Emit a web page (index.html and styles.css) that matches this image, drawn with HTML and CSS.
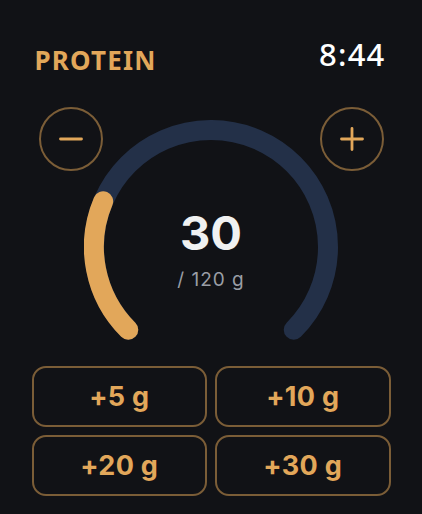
FILE: index.html
```html
<!DOCTYPE html>
<html lang="en">
<head>
  <meta charset="UTF-8">
  <meta name="viewport" content="width=device-width, initial-scale=1.0">
  <title>Protein</title>
  <link rel="stylesheet" href="styles.css">
</head>
<body>
  <div class="app">
    <!-- Header -->
    <div class="header">
      <h1 class="title">PROTEIN</h1>
      <div class="clock">8:44</div>
    </div>

    <!-- Dial -->
    <div class="dial">
      <button class="round minus" aria-label="Minus">
        <svg width="24" height="24" viewBox="0 0 24 24"><path d="M1.5 12h21" /></svg>
      </button>
      <button class="round plus" aria-label="Plus">
        <svg width="24" height="24" viewBox="0 0 24 24"><path d="M1.5 12h21M12 1.5v21" /></svg>
      </button>
      <svg class="gauge" width="254" height="222" viewBox="0 0 254 222">
        <path class="track" d="M44.27 209.73 A117 117 0 1 1 209.73 209.73" />
        <path class="fill" d="M44.27 209.73 A117 117 0 0 1 19.17 81.29" />
      </svg>
      <div class="readout">
        <div class="value">30</div>
        <div class="goal">/ 120 g</div>
      </div>
    </div>

    <!-- Quick add -->
    <div class="quick">
      <button class="add">+5 g</button>
      <button class="add">+10 g</button>
      <button class="add">+20 g</button>
      <button class="add">+30 g</button>
    </div>
  </div>
</body>
</html>
```

FILE: styles.css
```css
* {
  box-sizing: border-box;
  margin: 0;
  padding: 0;
}
body {
  background: #111216;
  font-family: Inter, "Noto Sans", sans-serif;
  color: #f2f2f2;
}
.app {
  width: 359px;
  margin: 0 auto;
  padding-top: 37px;
}
.header {
  display: flex;
  justify-content: space-between;
  align-items: flex-start;
  padding: 0 5px 0 3px;
}
.title {
  font-family: "Noto Sans", sans-serif;
  font-size: 26px;
  line-height: 30px;
  font-weight: 700;
  letter-spacing: 1.2px;
  color: #e2a75a;
  margin-top: 8px;
}
.clock {
  font-family: "Noto Sans", sans-serif;
  font-size: 31px;
  line-height: 34px;
  font-weight: 500;
  letter-spacing: 1.2px;
  color: #ffffff;
}
.dial {
  display: grid;
  margin-top: 32px;
  padding: 0 7px;
}
.dial > * {
  grid-area: 1 / 1;
}
.round {
  width: 64px;
  height: 64px;
  border-radius: 50%;
  border: 2px solid #7b5d37;
  background: transparent;
  display: flex;
  align-items: center;
  justify-content: center;
  align-self: start;
  z-index: 1;
}
.round svg {
  stroke: #e2a75a;
  stroke-width: 2.8;
  stroke-linecap: round;
  fill: none;
}
.minus {
  justify-self: start;
}
.plus {
  justify-self: end;
}
.gauge {
  justify-self: center;
  align-self: start;
  margin-top: 13px;
  fill: none;
  stroke-width: 20;
  stroke-linecap: round;
}
.track {
  stroke: #233048;
}
.fill {
  stroke: #e2a75a;
}
.readout {
  justify-self: center;
  align-self: start;
  margin-top: 103px;
  text-align: center;
}
.value {
  font-size: 47px;
  line-height: 46px;
  font-weight: 700;
  color: #f0f1f1;
}
.goal {
  font-size: 19px;
  line-height: 18px;
  letter-spacing: 1px;
  color: #9a9ea5;
  margin-top: 15px;
}
.quick {
  display: grid;
  grid-template-columns: 1fr 1fr;
  gap: 8px;
  margin-top: 24px;
}
.add {
  height: 61px;
  border-radius: 14px;
  border: 2px solid #7b5d37;
  background: transparent;
  font-family: Inter, sans-serif;
  font-size: 27px;
  font-weight: 700;
  letter-spacing: 0.3px;
  color: #e2a75a;
}
```
